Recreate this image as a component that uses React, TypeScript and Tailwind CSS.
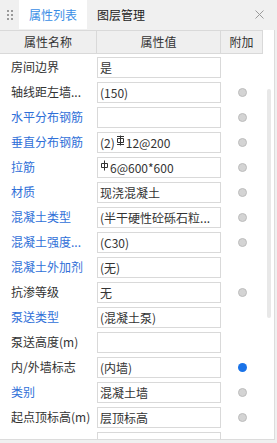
import React from "react";

type Row = { name: string; value: React.ReactNode; blue?: boolean; radio?: "gray" | "blue" | null };

const Rebar3 = () => (
  <svg width="9" height="11" viewBox="0 0 9 11" className="inline-block mx-[1px] -translate-y-[2px]">
    <path d="M1 1.5H8M4.5 0.5V10.5M1.5 3.5H7.5V7.5H1.5ZM1 9.5H8" fill="none" stroke="#333" strokeWidth="1" />
  </svg>
);
const Rebar1 = () => (
  <svg width="9" height="11" viewBox="0 0 9 11" className="inline-block mr-[1px] -translate-y-[2px]">
    <path d="M4.5 0.5V10.5M1.5 3.5H7.5V7.5H1.5Z" fill="none" stroke="#333" strokeWidth="1" />
  </svg>
);

const rows: Row[] = [
  { name: "房间边界", value: "是", radio: null },
  { name: "轴线距左墙...", value: "(150)", radio: "gray" },
  { name: "水平分布钢筋", value: "", blue: true, radio: "gray" },
  { name: "垂直分布钢筋", value: (<>(2)<Rebar3 />12@200</>), blue: true, radio: "gray" },
  { name: "拉筋", value: (<><Rebar1 />6@600*600</>), blue: true, radio: "gray" },
  { name: "材质", value: "现浇混凝土", blue: true, radio: "gray" },
  { name: "混凝土类型", value: "(半干硬性砼砾石粒...", blue: true, radio: "gray" },
  { name: "混凝土强度...", value: "(C30)", blue: true, radio: "gray" },
  { name: "混凝土外加剂", value: "(无)", blue: true, radio: null },
  { name: "抗渗等级", value: "无", radio: "gray" },
  { name: "泵送类型", value: "(混凝土泵)", blue: true, radio: null },
  { name: "泵送高度(m)", value: "", radio: null },
  { name: "内/外墙标志", value: "(内墙)", radio: "blue" },
  { name: "类别", value: "混凝土墙", blue: true, radio: "gray" },
  { name: "起点顶标高(m)", value: "层顶标高", radio: "gray" },
  { name: "", value: "", radio: null },
];

export default function App() {
  return (
    <div
      className="w-[277px] h-[443px] bg-[#f0f0f0] overflow-hidden text-[12px] text-[#333]"
      style={{ fontFamily: '"Noto Sans CJK SC", "Noto Sans", sans-serif' }}
    >
      {/* tab bar */}
      <div className="h-[30px] flex items-start relative">
        <div className="w-[19px] h-[30px] flex items-center justify-center">
          <div className="grid grid-cols-2 gap-x-[2px] gap-y-[2px]">
            {Array.from({ length: 6 }).map((_, i) => (
              <div key={i} className="w-[2px] h-[2px] bg-[#9a9a9a]" />
            ))}
          </div>
        </div>
        <div className="h-[29px] w-[68px] bg-white flex items-center justify-center text-[#3a8ee6]">属性列表</div>
        <div className="h-[29px] pl-[10px] flex items-center text-[#222]">图层管理</div>
        <div className="absolute right-[13px] top-[10px]">
          <svg width="9" height="9" viewBox="0 0 9 9">
            <path d="M0.5 0.5L8.5 8.5M8.5 0.5L0.5 8.5" stroke="#9a9a9a" strokeWidth="1" />
          </svg>
        </div>
      </div>

      {/* panel */}
      <div className="w-[275px] h-[410px] bg-white border-r border-b border-[#dcdcdc] flex overflow-hidden">
        <div className="w-[263px] flex flex-col overflow-hidden">
          <div className="h-[24px] flex border-t border-b border-[#d9d9d9] bg-[#efefef] shrink-0">
            <div className="w-[97px] border-r border-[#d9d9d9] flex items-center justify-center">属性名称</div>
            <div className="w-[124px] border-r border-[#d9d9d9] flex items-center justify-center">属性值</div>
            <div className="w-[42px] border-r border-[#d9d9d9] flex items-center justify-center">附加</div>
          </div>
          {rows.map((r, i) => (
            <div key={i} className="h-[25px] flex shrink-0">
              <div
                className={`w-[97px] pl-[11px] flex items-center whitespace-nowrap overflow-hidden ${r.blue ? "text-[#2f6fd8]" : "text-[#333]"}`}
              >
                {r.name}
              </div>
              <div className="w-[124px] pt-[3px]">
                <div className="h-[21px] border border-[#d9d9d9] pl-[2px] flex items-center whitespace-nowrap overflow-hidden">
                  {r.value}
                </div>
              </div>
              <div className="w-[42px] flex items-center justify-center pt-[1px]">
                {r.radio === "gray" && (
                  <div className="w-[9px] h-[9px] rounded-full bg-[#d4d4d4] border border-[#bdbdbd]" />
                )}
                {r.radio === "blue" && <div className="w-[9px] h-[9px] rounded-full bg-[#1a73e8]" />}
              </div>
            </div>
          ))}
        </div>
        <div className="flex-1 flex justify-center pt-[59px]">
          <div className="w-[4px] h-[229px] bg-[#e8e8e8] rounded-[2px]" />
        </div>
      </div>
    </div>
  );
}
